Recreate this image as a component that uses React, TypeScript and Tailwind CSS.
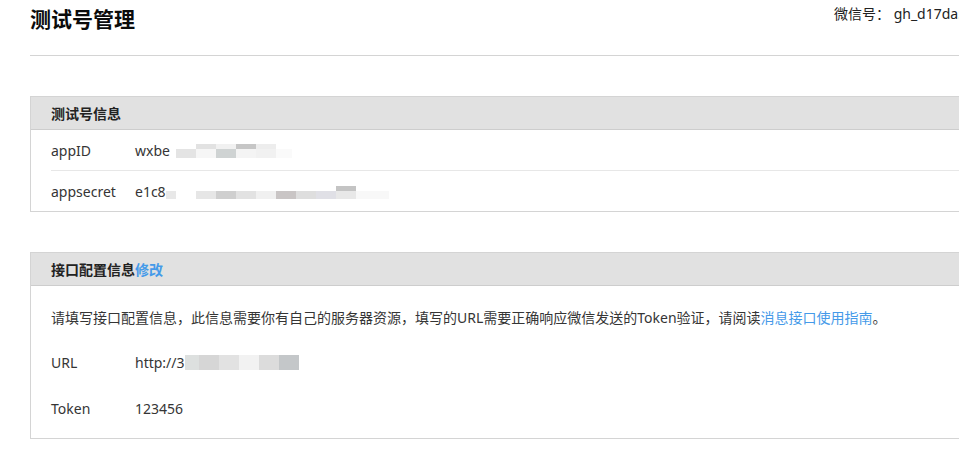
import React from 'react';

type Cell = { w: number; c: string };

// pixelated (masked) parts of the secret values, two rows each
const appIdMask: Cell[][] = [
	[{ w: 20, c: '#ffffff' }, { w: 20, c: '#e2e2e2' }, { w: 20, c: '#f1f1f1' }, { w: 20, c: '#c6c6c6' }, { w: 20, c: '#ededed' }],
	[{ w: 20, c: '#e4e4e4' }, { w: 20, c: '#f6f6f6' }, { w: 20, c: '#cfd3d3' }, { w: 20, c: '#f4f4f4' }, { w: 20, c: '#f1f1f1' }, { w: 16, c: '#fafafa' }],
];

const secretMask: Cell[][] = [
	[{ w: 170, c: '#ffffff' }, { w: 20, c: '#c4c4c4' }],
	[{ w: 10, c: '#e8e8e8' }, { w: 20, c: '#ffffff' }, { w: 20, c: '#e6e6e6' }, { w: 20, c: '#cfcfcf' }, { w: 20, c: '#e2e2e2' }, { w: 20, c: '#f0f0f0' }, { w: 20, c: '#c9c5c5' }, { w: 20, c: '#dedede' }, { w: 20, c: '#e0e0e6' }, { w: 20, c: '#e8e8e8' }, { w: 33, c: '#f8f8f8' }],
];

const urlMask: Cell[][] = [
	[{ w: 14, c: '#dde0df' }, { w: 20, c: '#d6d6d6' }, { w: 20, c: '#e2e2e2' }, { w: 20, c: '#f2f2f2' }, { w: 20, c: '#dcdcdc' }, { w: 20, c: '#c4c7c9' }],
];

function Mask({ rows, h }: { rows: Cell[][]; h: number[] }) {
	return (
		<div className="flex flex-col">
			{rows.map((row, i) => (
				<div key={i} className="flex" style={{ height: h[i] }}>
					{row.map((cell, j) => (
						<div key={j} style={{ width: cell.w, background: cell.c }} />
					))}
				</div>
			))}
		</div>
	);
}

function App() {
	return (
		<div
			className="w-[959px] h-[449px] overflow-hidden bg-white text-[14px] text-[#353535]"
			style={{ fontFamily: '"Noto Sans", "Noto Sans CJK SC", sans-serif' }}
		>
			<div className="pl-[30px] w-[1100px]">
				{/* 顶部标题 */}
				<div className="flex w-[929px] h-[56px] border-b border-[#d4d4d4]">
					<h1 className="flex-1 pt-[5px] text-[21px] leading-[28px] font-bold text-[#0b0b0b]">测试号管理</h1>
					<div className="w-[125px] shrink-0 whitespace-nowrap pt-[4px] leading-[20px] text-[#222]">
						微信号：&nbsp;gh_d17da5c0e3b1
					</div>
				</div>

				{/* 测试号信息 */}
				<div className="mt-[40px] w-[1000px] border border-[#d4d4d4]">
					<div className="h-[33px] bg-[#e1e1e1] border-b border-[#cdcdcd] px-[20px] flex items-center font-bold text-[#222]">
						测试号信息
					</div>
					<div className="px-[20px]">
						<div className="h-[41px] flex items-center border-b border-[#e7e7e7]">
							<div className="w-[84px]">appID</div>
							<div className="flex items-center">
								<span>wxbe</span>
								<div className="ml-[6px] mt-[2px]">
									<Mask rows={appIdMask} h={[5, 9]} />
								</div>
							</div>
						</div>
						<div className="h-[40px] flex items-center">
							<div className="w-[84px]">appsecret</div>
							<div className="flex items-center">
								<span>e1c8</span>
								<div className="mt-[2px]">
									<Mask rows={secretMask} h={[5, 8]} />
								</div>
							</div>
						</div>
					</div>
				</div>

				{/* 接口配置信息 */}
				<div className="mt-[40px] w-[1000px] border border-[#d4d4d4]">
					<div className="h-[33px] bg-[#e1e1e1] border-b border-[#cdcdcd] px-[20px] flex items-center font-bold text-[#222]">
						接口配置信息<a className="text-[#459ae9] cursor-pointer">修改</a>
					</div>
					<div className="px-[20px] pt-[22px] pb-[7px]">
						<p className="leading-[20px] whitespace-nowrap">
							请填写接口配置信息，此信息需要你有自己的服务器资源，填写的URL需要正确响应微信发送的Token验证，请阅读
							<a className="text-[#459ae9] cursor-pointer">消息接口使用指南</a>。
						</p>
						<div className="mt-[11px] h-[46px] flex items-center">
							<div className="w-[84px]">URL</div>
							<div className="flex items-center">
								<span>http://3</span>
								<Mask rows={urlMask} h={[15]} />
							</div>
						</div>
						<div className="h-[46px] flex items-center">
							<div className="w-[84px]">Token</div>
							<div>123456</div>
						</div>
					</div>
				</div>
			</div>
		</div>
	);
}

export default App;
